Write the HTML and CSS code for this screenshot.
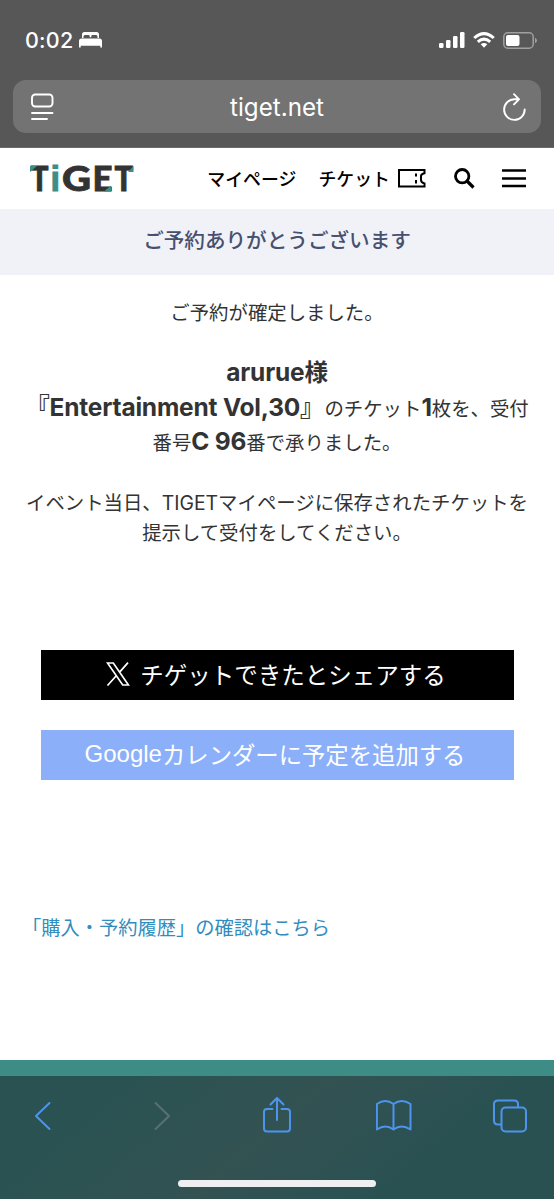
FILE: index.html
```html
<!DOCTYPE html>
<html lang="ja">
<head>
<meta charset="utf-8">
<title>TIGET</title>
<link rel="stylesheet" href="styles.css">
</head>
<body>
<div class="phone">
  <div class="chrome">
    <div class="status">
      <div class="clock"><span>0:02</span>
        <svg width="23" height="16" viewBox="0 0 23 16" fill="#fff"><path d="M3 6V2.500Q3 0 5.500 0h12Q20 0 20 2.500V6h-1.500V4.500Q18.500 3 17 3h-3.500Q12.300 3 12.300 4.200V5.200h-1.600V4.200Q10.700 3 9.500 3H6Q4.500 3 4.500 4.500V6zM0 15.500V9Q0 6.500 2.500 6.500h18Q23 6.500 23 9v6.500h-1.700V13.700H1.700v1.800z"/></svg>
      </div>
      <div class="signals">
        <svg width="26" height="17" viewBox="0 0 26 17" fill="#fff"><rect x="0" y="11" width="4.500" height="5" rx="1.300"/><rect x="7" y="8" width="4.500" height="8" rx="1.300"/><rect x="14" y="4" width="4.500" height="12" rx="1.300"/><rect x="21" y="0" width="4.500" height="16" rx="1.300"/></svg>
        <svg width="22" height="17" viewBox="0 0 22 17" fill="none" stroke="#fff" stroke-width="3"><path d="M1.200 6Q11-2.800 20.800 6"/><path d="M4.800 9.800Q11 4.400 17.200 9.800"/><path d="M7.700 12.300Q11 9.700 14.300 12.300L11 15.700z" fill="#fff" stroke="none"/></svg>
        <svg width="34" height="17" viewBox="0 0 34 17"><rect x=".8" y=".8" width="29.400" height="15.400" rx="4" fill="none" stroke="#a0a0a0" stroke-width="1.500"/><rect x="3" y="3" width="13.500" height="11" rx="2" fill="#fff"/><path d="M32 5.800Q34 7 34 8.500T32 11.200z" fill="#a0a0a0"/></svg>
      </div>
    </div>
    <div class="address">
      <svg width="23" height="28" viewBox="0 0 23 28" fill="none" stroke="#fff" stroke-width="1.900" stroke-linecap="round"><rect x="1" y="1.500" width="20.500" height="12" rx="3.200"/><path d="M1 20h20.500M1 26h15"/></svg>
      <span>tiget.net</span>
      <svg width="23" height="28" viewBox="0 0 23 28" fill="none" stroke="#fff" stroke-width="1.900" stroke-linecap="round" stroke-linejoin="round"><path d="M11.500 6.300A10.300 10.300 0 1 0 21.700 16.500M11.500 6.300H16M11 1.200L16 6.300L11 11.400"/></svg>
    </div>
  </div>
  <header class="site-header">
    <svg class="logo" width="104" height="45" viewBox="0 -10 104 45" role="img" aria-label="TiGET">
      <text class="mark" x=".5" y="25" textLength="18" lengthAdjust="spacingAndGlyphs">T</text>
      <text class="mark mark-i" x="20.500" y="25">i</text>
      <text class="mark" x="32" y="25" textLength="29" lengthAdjust="spacingAndGlyphs">G</text>
      <text class="mark" x="62.500" y="25" textLength="20" lengthAdjust="spacingAndGlyphs">E</text>
      <text class="mark" x="84.500" y="25" textLength="18.500" lengthAdjust="spacingAndGlyphs">T</text>
      <path class="accent" d="M0 0H7L0 6zM81 25.500V19.500L74 25.500zM103.500 0V6H98z"/>
    </svg>
    <nav class="nav">
      <a class="mypage">マイページ</a>
      <a class="tickets">チケット</a>
      <svg class="ticket-icon" width="28" height="19" viewBox="0 0 28 19" fill="none" stroke="#000" stroke-width="2"><path d="M1 1H26.500V4.200Q23 5 23 7.200V11Q23 13.500 26.500 14.500V17.500H1zM18 4.500v3M18 11v3.500"/></svg>
      <svg class="search-icon" width="21" height="21" viewBox="0 0 21 21" fill="none" stroke="#000"><circle cx="8.200" cy="8.200" r="6.700" stroke-width="2.800"/><path d="M13 13L19.500 19.500" stroke-width="3.200"/></svg>
      <svg width="24" height="19" viewBox="0 0 24 19" stroke="#000" stroke-width="2.500"><path d="M0 1.500H24M0 9.500H24M0 17H24"/></svg>
    </nav>
  </header>
  <h1 class="title">ご予約ありがとうございます</h1>
  <main class="content">
    <div class="line">ご予約が確定しました。</div>
    <div class="booking">
      <div><b>arurue<span class="sama">様</span></b></div>
      <div><b>『Entertainment Vol,30』</b>のチケット<b>1</b>枚を、受付</div>
      <div>番号<b>C 96</b>番で承りました。</div>
    </div>
    <div class="line">イベント当日、TIGETマイページに保存されたチケットを</div>
    <div class="line">提示して受付をしてください。</div>
    <a class="button share">
      <svg width="24" height="24" viewBox="0 0 24 24" fill="none" stroke="#fff"><path stroke-width="1.700" d="M1.500 1H7.300L22.500 23H16.700zM22 .6L13.200 10.600M10.500 13.500L1.500 23.500"/></svg>
      <span>チゲットできたとシェアする</span>
    </a>
    <a class="button calendar"><span class="google">Google</span>カレンダーに予定を追加する</a>
    <a class="history">「購入・予約履歴」の確認はこちら</a>
  </main>
  <div class="footer-edge"></div>
  <div class="toolbar">
    <div class="tools">
      <svg width="36" height="38" viewBox="0 0 36 38"><path d="M23.500 7L10 20L23.500 33"/></svg>
      <svg class="disabled" width="36" height="38" viewBox="0 0 36 38"><path d="M12.500 7L26 20L12.500 33"/></svg>
      <svg width="36" height="38" viewBox="0 0 36 38"><path d="M13.500 13H8Q5 13 5 16V32.500Q5 35.500 8 35.500H28Q31 35.500 31 32.500V16Q31 13 28 13H22.500M18 24V2.500M11.500 8.500L18 2L24.500 8.500"/></svg>
      <svg width="36" height="38" viewBox="0 0 36 38"><path d="M17.500 8Q9.500 2 .9 8V33.500Q9.500 27.500 17.500 33.500Q25.500 27.500 34.500 33.500V8Q25.500 2 17.500 8V33"/></svg>
      <svg width="36" height="38" viewBox="0 0 36 38"><path d="M9 28.500H6Q2 28.500 2 24.500V8Q2 4.500 6 4.500H22Q26 4.500 26 8V11"/><rect x="9.500" y="11.500" width="24.500" height="24" rx="4"/></svg>
    </div>
    <div class="home-indicator"></div>
  </div>
</div>
</body>
</html>
```
FILE: styles.css
```css
* { box-sizing: border-box; }
body { margin: 0; background: #fff; color: #333; font-family: Inter, "Noto Sans CJK JP", sans-serif; }
svg { display: block; flex: none; }
.phone { width: 554px; height: 1199px; display: flex; flex-direction: column; overflow: hidden; }
.chrome { height: 148px; flex: none; background: #575757; color: #fff; padding: 0 13px; border-bottom: 1px solid #4e7773; }
.status { height: 80px; padding: 0 4px 0 12px; display: flex; justify-content: space-between; align-items: center; }
.clock { display: flex; align-items: center; gap: 6px; font-size: 21.500px; font-weight: 500; letter-spacing: .2px; }
.signals { display: flex; align-items: center; gap: 8px; }
.address { height: 53px; border-radius: 13px; background: #737373; padding: 0 15px 0 18px; display: flex; align-items: center; justify-content: space-between; font-size: 24.200px; }
.address span { margin-right: 3px; padding-top: 1px; }
.site-header { height: 61px; flex: none; display: flex; align-items: center; justify-content: space-between; padding: 0 28px 0 30px; }
.mark { font: 900 34.500px Lato, sans-serif; fill: #333; stroke: #333; stroke-width: .8px; }
.mark-i { font: bold 34.500px "Liberation Sans", sans-serif; fill: #3c8e89; stroke: #3c8e89; stroke-width: 1px; }
.accent { fill: #3c8e89; }
.nav { display: flex; align-items: center; color: #000; font: 500 17.900px/24px "Noto Sans CJK JP", sans-serif; white-space: nowrap; }
.nav a { padding-bottom: 2px; }
.mypage { margin-right: 22px; }
.tickets { margin-right: 8px; }
.ticket-icon { margin-right: 28px; }
.search-icon { margin-right: 27px; }
.title { margin: 0; height: 66px; flex: none; background: #f1f2f7; color: #47506e; text-align: center; font: 500 20.600px/60px "Noto Sans CJK JP", sans-serif; }
.content { height: 785px; flex: none; padding-top: 22.500px; font-size: 19.400px; white-space: nowrap; text-align: center; }
.line { height: 30px; line-height: 30px; }
.booking { margin: 27.500px 0 29.500px; }
.booking div { height: 34.500px; line-height: 34.500px; }
.booking b { font-size: 24.500px; font-weight: 700; letter-spacing: -.2px; }
.sama { font-size: 23.500px; }
.button { display: flex; align-items: center; justify-content: center; width: 473px; height: 50px; margin: 0 auto; padding-bottom: 2px; color: #fff; font-size: 23.500px; }
.share { background: #000; margin-top: 102px; gap: 10px; padding-right: 2px; }
.calendar { background: #8baff9; margin-top: 30px; padding-right: 4px; font-size: 23.350px; }
.google { font: 24px "Liberation Sans", sans-serif; }
.history { display: block; margin-top: 133px; padding-left: 22px; line-height: 30px; text-align: left; color: #318dbd; font-size: 19.250px; }
.footer-edge { height: 16px; flex: none; background: #3d8c86; }
.toolbar { height: 123px; flex: none; background: linear-gradient(140deg, #2b5253 20%, #335252 48%, #2a5152 75%); padding: 20px 26px 0 26px; }
.tools { display: flex; justify-content: space-between; fill: none; stroke: #4d94ef; stroke-width: 2; stroke-linecap: round; stroke-linejoin: round; }
.disabled { stroke: #587172; }
.home-indicator { width: 198px; height: 7px; border-radius: 4px; background: #efeff2; margin: 46px auto 0; }
```
